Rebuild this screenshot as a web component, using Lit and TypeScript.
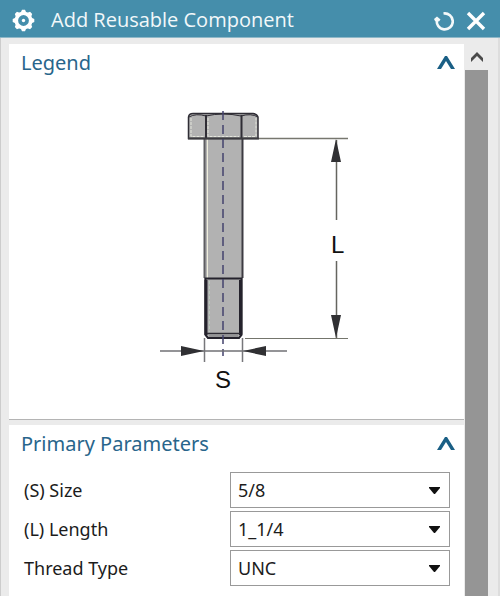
import { LitElement, html, css, svg } from "lit";
import { customElement, property } from "lit/decorators.js";

interface Parameter {
  id: string;
  label: string;
  value: string;
}

const PARAMETERS: Parameter[] = [
  { id: "size", label: "(S) Size", value: "5/8" },
  { id: "length", label: "(L) Length", value: "1_1/4" },
  { id: "thread", label: "Thread Type", value: "UNC" },
];

const GEAR_TEETH = [0, 45, 90, 135, 180, 225, 270, 315];

@customElement("param-section")
class ParamSection extends LitElement {
  @property() heading = "";

  static styles = css`
    :host {
      display: block;
      background: #ffffff;
    }
    .head {
      display: flex;
      align-items: center;
      justify-content: space-between;
      height: 38px;
      padding: 0 8px 0 12px;
    }
    .title {
      margin: 0;
      font-size: 20px;
      line-height: 28px;
      font-weight: 400;
      color: #28658b;
    }
    .toggle {
      display: flex;
      padding: 0;
      border: 0;
      background: none;
    }
  `;

  render() {
    return html`
      <div class="head">
        <h2 class="title">${this.heading}</h2>
        <button class="toggle" aria-label="Collapse ${this.heading}">
          <svg width="20" height="16" viewBox="0 0 20 16">
            <path d="M1 14 L9 1 H11 L19 14 H15 L10 6 L5 14 Z" fill="#1a5f85" />
          </svg>
        </button>
      </div>
      <slot></slot>
    `;
  }
}

/** Side view of a hex bolt with its S and L dimensions. */
@customElement("bolt-legend")
class BoltLegend extends LitElement {
  static styles = css`
    :host {
      display: flex;
      justify-content: center;
    }
    .label {
      font-family: "Liberation Sans", Arial, sans-serif;
      font-size: 24px;
      fill: #111111;
    }
  `;

  render() {
    return html`
      <svg width="301" height="318" viewBox="86 82 301 318" role="img" aria-label="Hex bolt dimensions">
        <path d="M204 138 H243 V334 L239 339 H208 L204 334 Z" fill="#b2b2b2" />
        <path d="M204.500 139 V278" stroke="#5e5e62" stroke-width="2" />
        <path d="M207.500 139 V278" stroke="#efeedd" />
        <path d="M242.500 139 V278" stroke="#3d3b42" stroke-width="2" />
        <path d="M188.500 138.500 V117 Q189 113.500 193 113.500 H253 Q257 114 258 117 V138.500 Z"
          fill="#b2b2b2" stroke="#2f2d35" stroke-width="1.500" />
        <path d="M189 117 Q196 113 206 116 Q223 112 241 116 Q251 113 258 117" fill="none" stroke="#2f2d35" />
        <path d="M206 115 V138 M241.500 115 V138" stroke="#2f2d35" stroke-width="2" />
        <path d="M191 118 V136.500 H204 M208 118 V136.500 H239 M244 136.500 H256 V118" fill="none"
          stroke="#e4e6dc" stroke-dasharray="3 1" />
        <path d="M188 138.500 H259" stroke="#3d3c40" stroke-width="2" />
        <path d="M259 138.500 H348" stroke="#77776f" stroke-width="1.500" />
        <path d="M205.500 278.500 H241.500 V335 L239 338 H208 L205.500 335 Z" fill="none" stroke="#24222c" stroke-width="2" />
        <path d="M206 280 V335 M240.500 280 V335" stroke="#24222c" stroke-width="3" />
        <path d="M207 333.500 H240" stroke="#2f2d35" stroke-width="1.500" />
        <path d="M209 336 H238" stroke="#77777a" />
        <path d="M209.500 281 V332" stroke="#bccabd" stroke-dasharray="3 2" />
        <path d="M223 111 V356" stroke="#44436e" stroke-width="1.500" stroke-dasharray="9 5" />
        <path d="M245 338.500 H348" stroke="#74756c" />
        <path d="M336.500 140 V220 M336.500 261 V338" stroke="#65655f" stroke-width="1.500" />
        <path d="M336 139 L341 162 H331 Z M336 338 L331 315 H341 Z" fill="#303033" />
        <path d="M204.500 338 V362 M242.500 338 V362" stroke="#77777b" stroke-width="1.500" />
        <path d="M160 351 H287" stroke="#707074" stroke-width="1.500" />
        <path d="M204 351 L181 346 V356 Z M243 351 L266 346 V356 Z" fill="#303033" />
        <text class="label" x="215" y="388">S</text>
        <text class="label" x="331" y="253">L</text>
      </svg>
    `;
  }
}

@customElement("app-root")
class AppRoot extends LitElement {
  static styles = css`
    :host {
      display: flex;
      flex-direction: column;
      min-height: 100vh;
      box-sizing: border-box;
      padding-bottom: 1px;
      background: #ffffff;
      font-family: "Noto Sans", "Open Sans", sans-serif;
      color: #1c1c1c;
    }
    .titlebar {
      display: flex;
      align-items: center;
      gap: 16px;
      height: 37px;
      padding: 0 14px 0 12px;
      background: #458eab;
      border-bottom: 1px solid #8fb8c8;
    }
    .name {
      flex: 1;
      margin: 0;
      padding-top: 2px;
      font-family: "Open Sans", "Noto Sans", sans-serif;
      font-size: 20px;
      line-height: 28px;
      font-weight: 400;
      color: #f2f8fa;
    }
    .tools {
      display: flex;
      gap: 12px;
      padding-top: 5px;
    }
    .tool {
      display: flex;
      padding: 0;
      border: 0;
      background: none;
    }
    .gear {
      padding-top: 3px;
    }
    .body {
      flex: 1;
      display: flex;
      padding: 6px 10px 0 8px;
      background: #ebebeb;
      border-left: 1px solid #cccccc;
      border-right: 2px solid #dddddd;
    }
    .panels {
      flex: 1;
      display: flex;
      flex-direction: column;
      gap: 5px;
    }
    .legend {
      padding-bottom: 19px;
      border-bottom: 1px solid #b4b4b4;
    }
    .primary {
      flex: 1;
    }
    .fields {
      display: grid;
      gap: 3px;
      padding: 9px 14px 10px 15px;
    }
    .field {
      display: grid;
      grid-template-columns: 206px 1fr;
      align-items: center;
    }
    .label {
      font-size: 18px;
      line-height: 24px;
    }
    .pick {
      position: relative;
    }
    .select {
      display: block;
      width: 100%;
      height: 36px;
      padding: 0 32px 0 7px;
      appearance: none;
      border: 1px solid #999999;
      border-radius: 0;
      background: #ffffff;
      font: inherit;
      font-size: 18px;
      color: inherit;
    }
    .arrow {
      position: absolute;
      right: 10px;
      top: 15px;
      pointer-events: none;
    }
    .scroll {
      display: flex;
      flex-direction: column;
      width: 23px;
      margin-left: 1px;
    }
    .up {
      display: flex;
      justify-content: center;
      align-items: center;
      height: 26px;
      padding: 0;
      border: 0;
      background: none;
    }
    .thumb {
      flex: 1;
      background: #959595;
    }
  `;

  render() {
    return html`
      <header class="titlebar">
        <svg class="gear" width="23" height="23" viewBox="0 0 23 23" aria-hidden="true">
          ${GEAR_TEETH.map(
            (a) => svg`<path d="M8.500 4 L10 0.700 H13 L14.500 4 Z" fill="#ffffff" transform="rotate(${a} 11.500 11.500)" />`
          )}
          <circle cx="11.500" cy="11.500" r="7.200" fill="none" stroke="#ffffff" stroke-width="3.600" />
          <circle cx="11.500" cy="11.500" r="1.700" fill="#ffffff" />
        </svg>
        <h1 class="name">Add Reusable Component</h1>
        <div class="tools">
          <button class="tool" aria-label="Reset">
            <svg width="20" height="20" viewBox="0 0 20 20">
              <path d="M9.500 2.500 A8 8 0 1 1 3 8.500" fill="none" stroke="#f4f9fa" stroke-width="2.600" />
              <path d="M0 8 L3 5.500 L6.500 8.500 L5 10.500 L1 10 Z" fill="#f4f9fa" />
            </svg>
          </button>
          <button class="tool" aria-label="Close">
            <svg width="20" height="20" viewBox="0 0 20 20">
              <path d="M2 2 L18 18 M18 2 L2 18" stroke="#ffffff" stroke-width="3.400" />
            </svg>
          </button>
        </div>
      </header>
      <main class="body">
        <div class="panels">
          <param-section class="legend" heading="Legend"><bolt-legend></bolt-legend></param-section>
          <param-section class="primary" heading="Primary Parameters">
            <div class="fields">
              ${PARAMETERS.map(
                (p) => html`
                  <div class="field">
                    <label class="label" for=${p.id}>${p.label}</label>
                    <div class="pick">
                      <select class="select" id=${p.id}>
                        <option>${p.value}</option>
                      </select>
                      <svg class="arrow" width="11" height="7" viewBox="0 0 11 7" aria-hidden="true">
                        <path d="M0 0 H11 V1 L6 7 H5 L0 1 Z" fill="#111111" />
                      </svg>
                    </div>
                  </div>
                `
              )}
            </div>
          </param-section>
        </div>
        <div class="scroll">
          <button class="up" aria-label="Scroll up">
            <svg width="12" height="10" viewBox="0 0 12 10">
              <path d="M0 6 L6 0 L12 6 V10 L6 4 L0 10 Z" fill="#4a4a4a" />
            </svg>
          </button>
          <div class="thumb"></div>
        </div>
      </main>
    `;
  }
}
